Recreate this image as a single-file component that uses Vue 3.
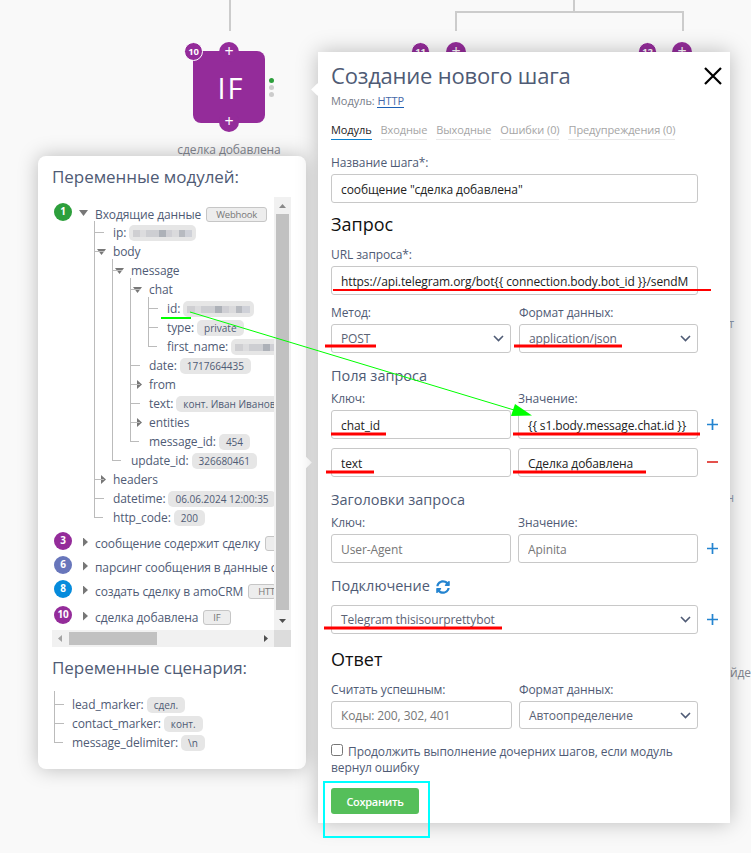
<script setup>
import { ref } from "vue";

const tabs = ["Модуль", "Входные", "Выходные", "Ошибки (0)", "Предупреждения (0)"];
const activeTab = ref("Модуль");

const stepName = ref('сообщение "сделка добавлена"');
const url = ref("https://api.telegram.org/bot{{ connection.body.bot_id }}/sendMessage");
const fields = ref([
  { key: "chat_id", value: "{{ s1.body.message.chat.id }}" },
  { key: "text", value: "Сделка добавлена" },
]);
const headerKey = ref("");
const headerValue = ref("");
const codes = ref("");
const continueOnError = ref(false);

// guides: one entry per level, "line" | "tee" | "end"
const L = "line";
const T = "tee";
const E = "end";
const rows = [
  { label: "ip:", guides: [T], hidden: 59, first: true },
  { label: "body", guides: [T], open: true },
  { label: "message", guides: [L, T], open: true, first: true },
  { label: "chat", guides: [L, L, T], open: true, first: true },
  { label: "id:", guides: [L, L, L, T], hidden: 63, first: true },
  { label: "type:", guides: [L, L, L, T], value: "private" },
  { label: "first_name:", guides: [L, L, L, E], hidden: 63 },
  { label: "date:", guides: [L, L, T], value: "1717664435" },
  { label: "from", guides: [L, L, T], open: false },
  { label: "text:", guides: [L, L, T], value: "конт. Иван Иванов" },
  { label: "entities", guides: [L, L, T], open: false },
  { label: "message_id:", guides: [L, L, E], value: "454" },
  { label: "update_id:", guides: [L, E], value: "326680461" },
  { label: "headers", guides: [T], open: false },
  { label: "datetime:", guides: [T], value: "06.06.2024 12:00:35" },
  { label: "http_code:", guides: [E], value: "200" },
];

const modules = [
  { id: 3, title: "сообщение содержит сделку", tag: " ", color: "purple" },
  { id: 6, title: "парсинг сообщения в данные с", tag: "", color: "indigo" },
  { id: 8, title: "создать сделку в amoCRM", tag: "HTTP", color: "blue" },
  { id: 10, title: "сделка добавлена", tag: "IF", color: "purple" },
];

const scenario = [
  { label: "lead_marker:", value: "сдел.", guides: [T], first: true },
  { label: "contact_marker:", value: "конт.", guides: [T] },
  { label: "message_delimiter:", value: "\\n", guides: [E] },
];
</script>

<template>
  <div class="canvas">
    <svg class="wires" width="751" height="60">
      <path d="M230 0V31M574 0V12M456 31V12H683V31" fill="none" stroke="#ccc" stroke-width="2" />
    </svg>

    <div class="node">
      <span class="port port-top">+</span>
      <span class="node-title">IF</span>
      <span class="port port-bottom">+</span>
      <span class="node-id">10</span>
      <span class="lights"><i class="on"></i><i></i><i></i></span>
    </div>
    <div class="node-label">сделка добавлена</div>

    <div class="stub stub-a"><span class="node-id">11</span><span class="port port-top">+</span></div>
    <div class="stub stub-b"><span class="node-id">12</span><span class="port port-top">+</span></div>
    <span class="far far-a">т</span>
    <span class="far far-b">н</span>
    <span class="far far-c">йде</span>

    <section class="panel vars">
      <h2>Переменные модулей:</h2>
      <div class="scroll">
        <div class="view">
          <div class="module root">
            <b class="num green">1</b>
            <i class="arrow open"></i>
            <span>Входящие данные</span>
            <span class="tag">Webhook</span>
          </div>
          <div class="tree">
            <div v-for="row in rows" :key="row.label" class="row">
              <i
                v-for="(g, i) in row.guides"
                :key="i"
                class="guide"
                :class="[g, { first: row.first && i === row.guides.length - 1 }]"
              >
                <i
                  v-if="i === row.guides.length - 1 && row.open !== undefined"
                  class="arrow"
                  :class="{ open: row.open }"
                ></i>
              </i>
              <span class="name">{{ row.label }}</span>
              <span v-if="row.value" class="chip">{{ row.value }}</span>
              <span v-if="row.hidden" class="chip masked">
                <i :style="{ width: row.hidden + 'px' }"></i>
              </span>
            </div>
          </div>
          <div v-for="m in modules" :key="m.id" class="module" :class="'m' + m.id">
            <b class="num" :class="m.color">{{ m.id }}</b>
            <i class="arrow"></i>
            <span>{{ m.title }}</span>
            <span v-if="m.tag" class="tag">{{ m.tag }}</span>
          </div>
        </div>
        <div class="bar-v">
          <svg width="17" height="17"><path d="M5 11L8.500 7L12 11Z" fill="#8a8a8a" /></svg>
          <i class="thumb"></i>
          <svg width="17" height="17"><path d="M5 6L8.500 10L12 6Z" fill="#505050" /></svg>
        </div>
        <div class="bar-h">
          <svg width="17" height="17"><path d="M10 5L6 8.500L10 12Z" fill="#a3a3a3" /></svg>
          <i class="thumb"></i>
          <svg width="17" height="17"><path d="M7 5L11 8.500L7 12Z" fill="#505050" /></svg>
        </div>
        <div class="corner"></div>
      </div>
      <h2 class="second">Переменные сценария:</h2>
      <div class="tree scenario">
        <div v-for="row in scenario" :key="row.label" class="row">
          <i class="guide" :class="[row.guides[0], { start: row.first }]"></i>
          <span class="name">{{ row.label }}</span>
          <span class="chip">{{ row.value }}</span>
        </div>
      </div>
    </section>

    <section class="panel step">
      <header>
        <h1>Создание нового шага</h1>
        <svg class="close" width="18" height="18" viewBox="0 0 18 18">
          <path d="M1 1L17 17M17 1L1 17" stroke="#000" stroke-width="2.2" />
        </svg>
      </header>
      <div class="module-line">Модуль: <a>HTTP</a></div>
      <nav>
        <a v-for="tab in tabs" :key="tab" :class="{ active: tab === activeTab }" @click="activeTab = tab">{{ tab }}</a>
      </nav>

      <label>Название шага*:</label>
      <input v-model="stepName" class="full" />

      <h2 class="request">Запрос</h2>
      <label>URL запроса*:</label>
      <input v-model="url" class="full" />
      <div class="pair types">
        <div>
          <label>Метод:</label>
          <div class="select">
            POST
            <svg width="11" height="7"><path d="M1 1L5.500 5.500L10 1" /></svg>
          </div>
        </div>
        <div>
          <label>Формат данных:</label>
          <div class="select">
            application/json
            <svg width="11" height="7"><path d="M1 1L5.500 5.500L10 1" /></svg>
          </div>
        </div>
      </div>

      <h3>Поля запроса</h3>
      <div class="pair labels"><label>Ключ:</label><label>Значение:</label></div>
      <div v-for="(f, i) in fields" :key="i" class="pair inputs">
        <input v-model="f.key" />
        <input v-model="f.value" />
        <svg class="action" width="11" height="11">
          <path v-if="i === 0" d="M5.500 0V11M0 5.500H11" stroke="#2484d0" stroke-width="1.700" />
          <path v-else d="M0 5H11" stroke="#e0322c" stroke-width="1.700" />
        </svg>
      </div>

      <h3>Заголовки запроса</h3>
      <div class="pair labels"><label>Ключ:</label><label>Значение:</label></div>
      <div class="pair inputs">
        <input v-model="headerKey" placeholder="User-Agent" />
        <input v-model="headerValue" placeholder="Apinita" />
        <svg class="action" width="11" height="11">
          <path d="M5.500 0V11M0 5.500H11" stroke="#2484d0" stroke-width="1.700" />
        </svg>
      </div>

      <h3 class="connection">
        Подключение
        <svg width="14" height="14" viewBox="0 0 512 512" fill="#2484d0">
          <path d="M370.700 133.300C339.500 104 298.900 88 255.800 88c-77.500.1-144.300 53.200-162.800 126.900-1.300 5.400-6.100 9.100-11.700 9.100H24.100c-7.500 0-13.200-6.800-11.800-14.200C33.900 94.900 134.800 8 256 8c66.400 0 126.800 26.100 171.300 68.700L463 41c15.100-15.100 41-4.400 41 17v134c0 13.300-10.700 24-24 24H346c-21.400 0-32.100-25.900-17-41l41.700-41.700zM32 296h134c21.400 0 32.100 25.900 17 41l-41.800 41.800c31.300 29.300 71.800 45.300 114.900 45.200 77.400-.1 144.300-53.100 162.800-126.800 1.300-5.400 6.100-9.100 11.700-9.100h57.300c7.500 0 13.200 6.800 11.800 14.200C478.100 417.100 377.200 504 256 504c-66.400 0-126.800-26.100-171.300-68.700L49 471c-15.100 15.100-41 4.400-41-17V320c0-13.300 10.700-24 24-24z" />
        </svg>
      </h3>
      <div class="pair inputs">
        <div class="select">
          Telegram thisisourprettybot
          <svg width="11" height="7"><path d="M1 1L5.500 5.500L10 1" /></svg>
        </div>
        <svg class="action" width="11" height="11">
          <path d="M5.500 0V11M0 5.500H11" stroke="#2484d0" stroke-width="1.700" />
        </svg>
      </div>

      <h2 class="answer">Ответ</h2>
      <div class="pair result">
        <div>
          <label>Считать успешным:</label>
          <input v-model="codes" placeholder="Коды: 200, 302, 401" />
        </div>
        <div>
          <label>Формат данных:</label>
          <div class="select">
            Автоопределение
            <svg width="11" height="7"><path d="M1 1L5.500 5.500L10 1" /></svg>
          </div>
        </div>
      </div>
      <p class="check">
        <input v-model="continueOnError" type="checkbox" />Продолжить выполнение дочерних шагов, если модуль вернул ошибку
      </p>
      <button class="save">Сохранить</button>
    </section>

    <!-- hand-drawn marks over the form -->
    <svg class="marks" width="751" height="853">
      <g stroke="#f00">
        <path d="M333 290H711" stroke-width="2" />
        <path d="M325 346H376M514 346H622M331 434H386M513 434H700M326 472H374M513 472H646M324 628H502" stroke-width="3" />
      </g>
      <path d="M161 318H191" stroke="#0f0" stroke-width="2" />
      <path d="M190 312L514 410" stroke="#0f0" stroke-width="1" />
      <path d="M515 404L532 415.500L511 416Z" fill="#0f0" />
      <rect x="324" y="782" width="105" height="55" fill="none" stroke="#0ff" stroke-width="2" />
    </svg>
  </div>
</template>

<style>
body {
  background: #f9f9f9;
  overflow: hidden;
}
</style>

<style scoped>
.canvas {
  position: relative;
  width: 751px;
  height: 853px;
  overflow: hidden;
  background: #f9f9f9;
  font-family: "Open Sans", sans-serif;
  font-size: 12px;
  letter-spacing: -0.1px;
  color: #4f5b75;
}

.canvas * {
  box-sizing: border-box;
}

h1,
h2,
h3,
p {
  margin: 0;
  font-weight: 400;
}

.wires,
.marks {
  position: absolute;
  left: 0;
  top: 0;
  pointer-events: none;
}

/* Scenario nodes */
.node {
  position: absolute;
  left: 193px;
  top: 51px;
  width: 72px;
  height: 72px;
  border-radius: 8px;
  background: #942c9a;
  color: #fff;
  display: flex;
  align-items: center;
  justify-content: center;
}

.node-title {
  font-size: 29px;
  letter-spacing: 2px;
  padding-left: 4px;
  padding-top: 1px;
}

.port {
  position: absolute;
  left: 26px;
  width: 20px;
  height: 20px;
  border-radius: 50%;
  background: #942c9a;
  color: #fff;
  font-size: 16px;
  line-height: 18px;
  text-align: center;
}

.port-top {
  top: -9px;
}

.port-bottom {
  top: 61px;
}

.node-id {
  position: absolute;
  left: -9px;
  top: -9px;
  width: 19px;
  height: 19px;
  border: 1px solid #fff;
  border-radius: 50%;
  background: #942c9a;
  color: #fff;
  font-size: 9.5px;
  font-weight: 700;
  line-height: 17px;
  text-align: center;
}

.lights {
  position: absolute;
  left: 76px;
  top: 27px;
  display: flex;
  flex-direction: column;
  gap: 2px;
}

.lights i {
  width: 5px;
  height: 5px;
  border-radius: 50%;
  background: #ccc;
}

.lights .on {
  background: #2d9f3c;
}

.node-label {
  position: absolute;
  left: 169px;
  top: 142px;
  width: 120px;
  line-height: 16px;
  text-align: center;
  color: #81858f;
}

.stub {
  position: absolute;
  top: 51px;
  width: 72px;
  height: 72px;
}

.stub-a {
  left: 420px;
}

.stub-b {
  left: 647px;
}

.stub-b .port {
  left: 25px;
}

.far {
  position: absolute;
  line-height: 16px;
  white-space: nowrap;
  color: #8f9bb0;
}

.far-a {
  right: 17px;
  top: 316px;
}

.far-b {
  right: 17px;
  top: 490px;
}

.far-c {
  right: 0;
  top: 665px;
  color: #81858f;
}

/* Floating windows */
.panel {
  position: absolute;
  background: #fff;
  box-shadow: 0 0 20px rgba(0, 0, 0, 0.25);
}

.panel::after {
  content: "";
  position: absolute;
  width: 9px;
  height: 9px;
  background: #fff;
  transform: rotate(45deg);
}

.vars {
  left: 38px;
  top: 156px;
  width: 268px;
  height: 613px;
  padding: 7px 14px;
  border-radius: 8px;
}

.vars::after {
  right: -4px;
  top: 302px;
}

.vars h2 {
  height: 34px;
  line-height: 28px;
  font-size: 17px;
  letter-spacing: -0.05px;
}

.vars h2.second {
  line-height: 42px;
  height: 48px;
}

.scroll {
  display: grid;
  width: 239px;
  height: 450px;
  grid-template-columns: 222px 17px;
  grid-template-rows: 433px 17px;
}

.view {
  overflow: hidden;
  padding-top: 6px;
}

.module {
  display: flex;
  align-items: center;
  height: 24px;
  white-space: nowrap;
}

.module.root {
  height: 20px;
  padding-top: 2px;
}

.module.m3 {
  margin-top: 4px;
}

.module.m10 {
  margin-top: 2px;
}

.num {
  flex: none;
  width: 18px;
  height: 18px;
  margin: -4px 11px 0 2px;
  border-radius: 50%;
  color: #fff;
  font-size: 10px;
  line-height: 17px;
  text-align: center;
}

.green {
  background: #2d9f3c;
}

.purple {
  background: #942c9a;
}

.indigo {
  background: #6876bb;
}

.blue {
  background: #058bdc;
}

.arrow {
  flex: none;
  width: 5px;
  height: 9px;
  background: #777;
  clip-path: polygon(0 0, 100% 50%, 0 100%);
}

.arrow.open {
  width: 9px;
  height: 6px;
  clip-path: polygon(0 0, 100% 0, 50% 100%);
}

.module .arrow {
  margin-top: -2px;
  margin-right: 7px;
}

.root .num {
  margin-right: 7px;
}

.tag {
  height: 15px;
  min-width: 28px;
  margin-left: 5px;
  padding: 0 9px;
  border: 1px solid #c6c6c6;
  border-radius: 3px;
  background: #ededed;
  color: #777;
  font-size: 9.5px;
  letter-spacing: -0.2px;
  line-height: 14px;
}

.tree {
  padding-left: 42px;
}

.row {
  display: flex;
  height: 19px;
  line-height: 19px;
  white-space: nowrap;
}

.guide {
  position: relative;
  flex: none;
  width: 18px;
  height: 19px;
}

.guide.line,
.guide.tee {
  border-left: 1px solid #bbb;
}

.guide.end::before {
  content: "";
  display: block;
  width: 1px;
  height: 9px;
  background: #bbb;
}

.guide.tee::after,
.guide.end::after {
  content: "";
  position: absolute;
  left: 0;
  top: 9px;
  width: 9px;
  height: 1px;
  background: #bbb;
}

.guide.first::before,
.guide.start::before {
  content: "";
  position: absolute;
  left: -1px;
  top: -2px;
  width: 1px;
  height: 2px;
  background: #bbb;
}

.guide.start::before {
  top: -4px;
  height: 4px;
}

.guide .arrow {
  position: absolute;
  left: 6px;
  top: 5px;
}

.guide .arrow.open {
  left: 2px;
  top: 7px;
}

.name {
  padding-left: 1px;
}

.chip {
  height: 16px;
  margin: 2px 0 0 3px;
  padding: 0 7px;
  border-radius: 5px;
  background: #e6e6e6;
  font-size: 10px;
  letter-spacing: 0;
  line-height: 16px;
}

.masked {
  padding: 5px 4px;
}

.masked i {
  display: block;
  height: 7px;
  background: linear-gradient(90deg, #cfcfd2 0 12%, #dcdcde 12% 22%, #cdced2 22% 44%, #adb1b8 44% 56%, #cfcfd4 56% 66%, #dadadc 66% 78%, #b7bac0 78% 88%, #cfd1d8 88%);
}

.scenario {
  padding-left: 2px;
}

.scenario .name {
  padding-left: 0;
}

.bar-v,
.bar-h {
  display: flex;
  background: #f1f1f1;
}

.bar-v {
  flex-direction: column;
}

.bar-v .thumb {
  flex: 1;
  width: 13px;
  margin: 0 2px 3px;
  background: #c1c1c1;
}

.bar-v svg,
.bar-h svg {
  flex: none;
}

.bar-h .thumb {
  width: 88px;
  height: 13px;
  margin: 2px auto 2px 0;
  background: #c1c1c1;
}

.corner {
  background: #dcdcdc;
}

/* Step editor */
.step {
  left: 318px;
  top: 52px;
  width: 412px;
  height: 771px;
  padding: 7px 0 0 13px;
}

.step::after {
  left: -5px;
  top: 33px;
}

header {
  display: flex;
  height: 32px;
  justify-content: space-between;
}

h1 {
  font-size: 22px;
  letter-spacing: -0.2px;
  line-height: 32px;
}

.close {
  margin: 8px 8px 0 0;
}

.module-line {
  height: 20px;
  line-height: 20px;
  font-size: 11px;
  letter-spacing: -0.05px;
  color: #777c88;
}

.module-line a {
  display: inline-block;
  height: 17px;
  line-height: 20px;
  border-bottom: 1px solid #1d5fb4;
  color: #4668a8;
  vertical-align: top;
}

nav {
  display: flex;
  gap: 9px;
  margin-top: 9px;
  height: 32px;
  font-size: 11px;
}

nav a {
  height: 20px;
  line-height: 20px;
  border-bottom: 1px solid #e9e9e9;
  color: #a5a5a5;
  white-space: nowrap;
}

nav a.active {
  color: #222;
  border-color: #0a7fcc;
}

label {
  display: block;
  height: 22px;
  line-height: 22px;
}

input:not([type]),
.select {
  display: block;
  width: 180px;
  height: 29px;
  padding: 1px 9px 0;
  border: 1px solid #c8c8c8;
  border-radius: 3px;
  background: #fff;
  color: #222;
  font: 12px "Open Sans", sans-serif;
  letter-spacing: inherit;
  outline: none;
}

input::placeholder {
  color: #777;
  opacity: 1;
}

input.full {
  width: 367px;
}

.pair .select {
  display: flex;
  align-items: center;
  justify-content: space-between;
  color: #5b6375;
  padding: 0 6px 0 9px;
}

.select svg {
  fill: none;
  stroke: #4f5b75;
  stroke-width: 1.6;
}

.pair {
  display: grid;
  width: 367px;
  grid-template-columns: 180px 179px;
  column-gap: 8px;
}

.pair.types {
  margin-top: 7px;
}

.pair.types > div:last-child .select,
.pair.result > div:last-child .select {
  width: 179px;
}

.pair.result {
  grid-template-columns: 181px 179px;
  column-gap: 7px;
}

.pair.result input {
  width: 181px;
  height: 28px;
}

.pair.result .select {
  height: 28px;
}

.pair.labels {
  grid-template-columns: 180px 180px;
  column-gap: 7px;
}

.pair.inputs {
  display: flex;
  width: 400px;
  gap: 7px;
  align-items: center;
}

.pair.inputs + .pair.inputs {
  margin-top: 9px;
}

.pair.inputs .action {
  margin-left: 2px;
}

.pair.inputs > .select {
  width: 367px;
}

.step h2 {
  font-size: 18px;
  letter-spacing: 0;
  color: #111;
}

.step .request {
  height: 41px;
  line-height: 42px;
}

.step .answer {
  height: 45px;
  line-height: 50px;
}

h3 {
  height: 35px;
  line-height: 46px;
  font-size: 14.5px;
  letter-spacing: 0;
}

.connection {
  display: flex;
  height: 42px;
  gap: 6px;
}

.connection svg {
  margin-top: 17px;
}

.check {
  width: 367px;
  margin-top: 15px;
  line-height: 16px;
}

.check input {
  width: 12px;
  height: 12px;
  margin: 0 5px 0 0;
  vertical-align: 0;
}

.save {
  display: block;
  width: 88px;
  height: 26px;
  margin-top: 12px;
  padding: 0;
  border: none;
  border-radius: 3px;
  background: #55bf5a;
  color: #fff;
  font: 600 11px "Open Sans", sans-serif;
  letter-spacing: -0.3px;
}
</style>
